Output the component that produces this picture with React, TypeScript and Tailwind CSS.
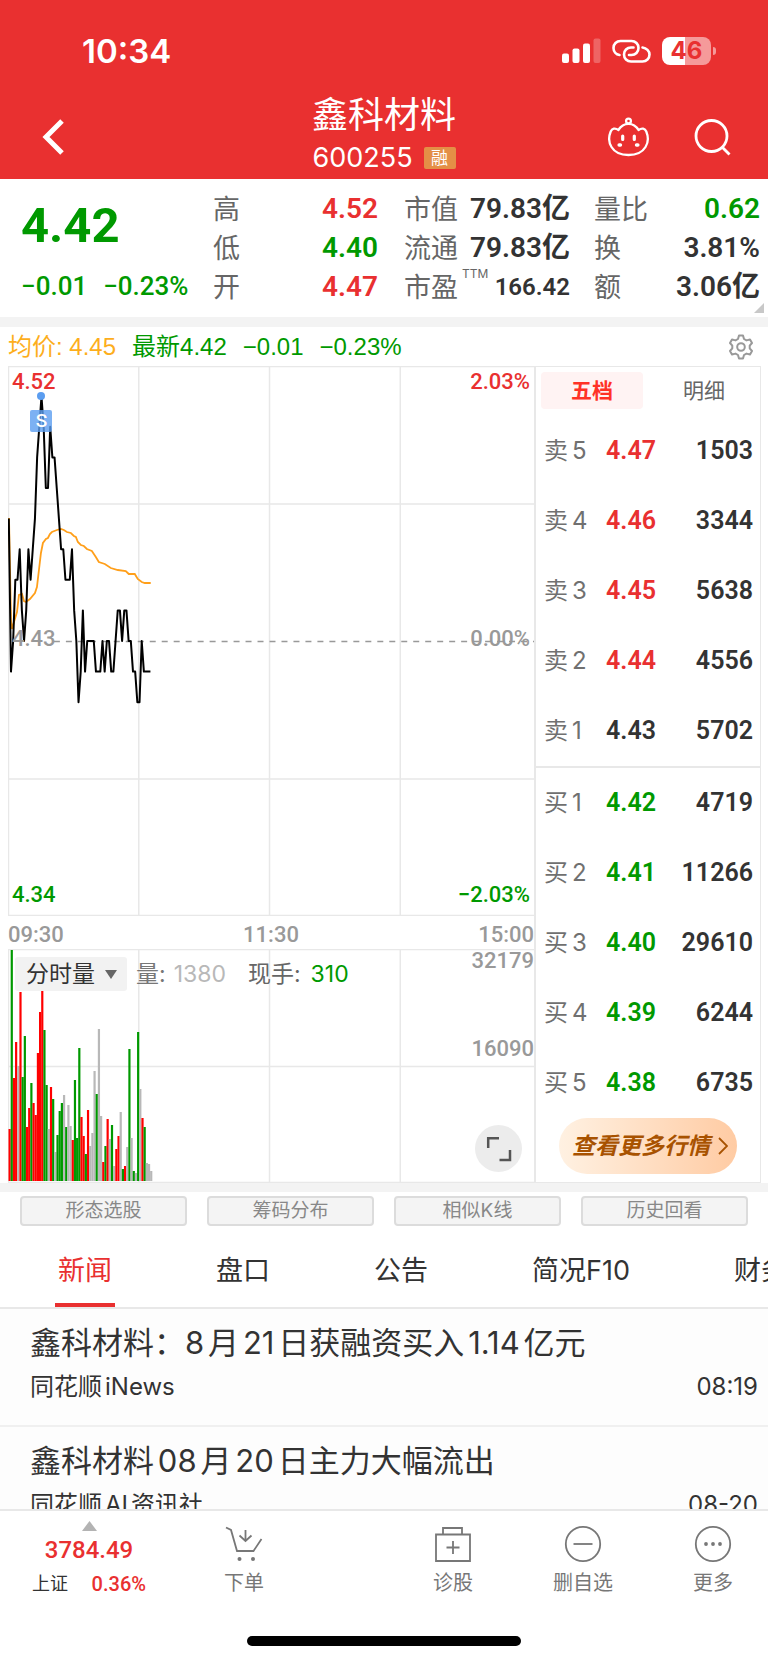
import React, { useState } from "react";

interface Level {
  label: string;
  price: string;
  volume: string;
  tone: string;
}

const RED = "text-[#e93030]";
const GREEN = "text-[#009900]";
const DARK = "text-[#333333]";

const numFont = "[font-family:Roboto,'Noto_Sans_CJK_SC',sans-serif]";

const sells: Level[] = [
  { label: "卖5", price: "4.47", volume: "1503", tone: RED },
  { label: "卖4", price: "4.46", volume: "3344", tone: RED },
  { label: "卖3", price: "4.45", volume: "5638", tone: RED },
  { label: "卖2", price: "4.44", volume: "4556", tone: RED },
  { label: "卖1", price: "4.43", volume: "5702", tone: DARK },
];

const buys: Level[] = [
  { label: "买1", price: "4.42", volume: "4719", tone: GREEN },
  { label: "买2", price: "4.41", volume: "11266", tone: GREEN },
  { label: "买3", price: "4.40", volume: "29610", tone: GREEN },
  { label: "买4", price: "4.39", volume: "6244", tone: GREEN },
  { label: "买5", price: "4.38", volume: "6735", tone: GREEN },
];

// one value per minute, in cents
const prices = [
  447, 442, 443, 445, 445, 446, 444, 443, 444, 446, 445, 446, 447, 449, 450, 451, 450, 448, 448, 450, 449, 449,
  448, 447, 446, 446, 445, 445, 445, 446, 444, 443, 441, 442, 444, 442, 443, 443, 443, 443, 442, 442, 442, 443,
  442, 443, 443, 442, 442, 443, 444, 444, 443, 444, 444, 443, 443, 442, 442, 441, 441, 443, 442, 442, 442, 442,
];

const average: [number, number][] = [
  [1, 152], [3, 254], [4, 263], [6, 256], [9, 246], [11, 229], [14, 228], [16, 235], [18, 236], [22, 233],
  [27, 227], [29, 221], [31, 204], [33, 187], [35, 177], [38, 173], [40, 172], [42, 168], [44, 166], [49, 164],
  [53, 163], [56, 164], [59, 166], [63, 167], [66, 170], [68, 171], [70, 176], [73, 179], [76, 180], [79, 183],
  [84, 185], [88, 191], [91, 196], [97, 198], [103, 202], [110, 204], [118, 205], [121, 208], [127, 208],
  [130, 213], [134, 216], [137, 217], [143, 217],
];

const R = "#ff0000";
const G = "#009900";
const N = "#b8b8b8";

const volumes: [number, string][] = [
  [52, R], [231, G], [103, R], [139, R], [115, N], [189, R], [104, G], [145, G], [54, R], [73, R], [98, G],
  [78, R], [66, R], [128, R], [169, R], [190, R], [151, G], [96, G], [52, N], [94, R], [82, G], [29, N],
  [46, G], [70, G], [78, G], [86, N], [54, G], [76, N], [55, N], [41, R], [101, G], [43, G], [133, G],
  [64, R], [45, R], [27, G], [71, R], [35, N], [48, N], [110, N], [87, G], [152, N], [65, N], [19, R],
  [35, G], [62, R], [42, N], [56, G], [15, N], [32, R], [45, R], [69, N], [12, G], [15, R], [34, N],
  [132, G], [43, N], [10, G], [8, N], [149, G], [92, N], [63, R], [54, G], [18, N], [17, N], [10, N],
];

const STEP = 2.183;
const priceX = (i: number) => 0.8 + i * STEP;
const priceY = (p: number) => 275 - (p - 443) * 30.6;
const PEAK = 15;

const StatusBar = () => (
  <div className="flex h-[98px] items-center justify-between pt-1 pr-[52px] pl-[82px]">
    <span className="text-[33px] leading-10 font-semibold">10:34</span>
    <div className="flex items-center gap-[10px]">
      <svg width="40" height="26" viewBox="0 0 40 26" fill="currentColor">
        <rect x="0" y="15.500" width="7" height="9.500" rx="2" />
        <rect x="10.500" y="10.500" width="7" height="14.500" rx="2" />
        <rect x="21" y="5.500" width="7" height="19.500" rx="2" />
        <rect x="31.500" y="0.500" width="7" height="24.500" rx="2" opacity="0.25" />
      </svg>
      <svg width="40" height="26" viewBox="0 0 40 26" fill="none" stroke="currentColor" strokeWidth="2.600" strokeLinecap="round">
        <path d="M7.500 17C4 16.500 1.500 13.500 1.500 10C1.500 6 4.500 3 8.500 3H19.500C23.500 3 26.500 6 26.500 10C26.500 14 23.500 17 19.500 17H17" />
        <path d="M30.500 9.500C34.500 10 37.500 13 37.500 16.500C37.500 20.500 34.500 23.500 30.500 23.500H19C15 23.500 12 20.500 12 16.500C12 12.500 15 9.500 19 9.500H21.500" />
      </svg>
      <div className="flex items-center gap-[2px]">
        <div className="flex h-7 w-[49px] items-center justify-center rounded-lg bg-[linear-gradient(90deg,#fff_47%,#f59a9a_47%)] text-2xl leading-7 font-bold text-[#e93030]">
          46
        </div>
        <div className="h-2 w-[3px] rounded-r-full bg-[#f59a9a]" />
      </div>
    </div>
  </div>
);

const TitleBar = () => (
  <div className="grid h-[81px] grid-cols-3">
    <div className="flex items-center pb-[7px] pl-[39px]">
      <button aria-label="返回">
        <svg width="28" height="38" viewBox="0 0 28 38" fill="none" stroke="currentColor" strokeWidth="5">
          <path d="M23 3L7 19L23 35" />
        </svg>
      </button>
    </div>
    <div className="flex flex-col items-center">
      <h1 className="-mt-2 text-[36px] leading-[44px] font-normal [font-family:'Noto_Sans_CJK_SC',sans-serif]">鑫科材料</h1>
      <div className="flex items-center gap-[11px]">
        <span className="text-[27px] leading-[48px]">600255</span>
        <span className="flex h-[22px] w-8 items-center justify-center rounded-[2px] bg-[#e48f46] text-[17px] leading-[22px]">融</span>
      </div>
    </div>
    <div className="flex items-center justify-end gap-[44px] pr-[36px] pb-[7px]">
      <button aria-label="助手">
        <svg width="42" height="42" viewBox="0 0 42 42" fill="none" stroke="currentColor" strokeWidth="2.300" strokeLinejoin="round">
          <circle cx="20.500" cy="5" r="2.400" />
          <path d="M20.500 7.800C25 7.800 28.500 10.500 30.500 14C34 11.500 37 12.500 38.300 15.500C40.500 21 40 27 37.500 31C34.500 36 28 39 20.500 39C13 39 6.500 36 3.500 31C1 27 0.500 21 2.700 15.500C4 12.500 7 11.500 10.500 14C12.500 10.500 16 7.800 20.500 7.800Z" />
          <path d="M14.700 20V23.500M26.300 20V23.500" strokeWidth="3.200" strokeLinecap="round" />
          <path d="M11.200 29H12.400M28.600 29H29.800" strokeWidth="3.600" strokeLinecap="round" />
        </svg>
      </button>
      <button aria-label="搜索">
        <svg width="38" height="38" viewBox="0 0 38 38" fill="none" stroke="currentColor" strokeWidth="2.800">
          <circle cx="17.500" cy="18" r="15.500" />
          <path d="M28 29L35.500 36.500" />
        </svg>
      </button>
    </div>
  </div>
);

const Stat = ({ label, sup, value, tone, small }: { label: string; sup?: string; value: string; tone: string; small?: boolean }) => (
  <div className="flex h-[39px] items-center justify-between">
    <dt className="flex pt-[3px] text-[27px] text-[#666666]">
      {label}
      {sup && <sup className="top-0 ml-1 text-xs leading-3">{sup}</sup>}
    </dt>
    <dd className={`${numFont} font-semibold ${tone} ${small ? "text-[24px]" : "text-[28px]"}`}>{value}</dd>
  </div>
);

const Quote = () => (
  <section className="relative flex h-[148px] border-b-10 border-[#f3f3f3] pt-[10px] pr-2 pl-[21px]">
    <div className={`w-[192px] shrink-0 ${numFont} ${GREEN}`}>
      <div className="pt-3 text-[49px] leading-[50px] font-bold">4.42</div>
      <div className="flex gap-4 pt-[17px] text-[26px] leading-9 font-medium">
        <span>−0.01</span>
        <span>−0.23%</span>
      </div>
    </div>
    <dl className="w-[165px] shrink-0">
      <Stat label="高" value="4.52" tone={RED} />
      <Stat label="低" value="4.40" tone={GREEN} />
      <Stat label="开" value="4.47" tone={RED} />
    </dl>
    <dl className="ml-[26px] w-[166px] shrink-0">
      <Stat label="市值" value="79.83亿" tone={DARK} />
      <Stat label="流通" value="79.83亿" tone={DARK} />
      <Stat label="市盈" sup="TTM" value="166.42" tone={DARK} small />
    </dl>
    <dl className="ml-6 min-w-0 flex-1">
      <Stat label="量比" value="0.62" tone={GREEN} />
      <Stat label="换" value="3.81%" tone={DARK} />
      <Stat label="额" value="3.06亿" tone={DARK} />
    </dl>
    <svg className="absolute right-1 bottom-1" width="10" height="10" viewBox="0 0 10 10" fill="#c8c8c8">
      <path d="M10 0V10H0Z" />
    </svg>
  </section>
);

const InfoBar = () => (
  <div className={`flex h-[39px] items-center pr-[14px] pl-2 text-2xl [font-family:'Liberation_Sans','Noto_Sans_CJK_SC',sans-serif] ${GREEN}`}>
    <span className="text-[#fdae1c]">均价: 4.45</span>
    <span className="ml-4">最新4.42</span>
    <span className="ml-4">−0.01</span>
    <span className="ml-4">−0.23%</span>
    <button aria-label="设置" className="ml-auto">
      <svg width="26" height="26" viewBox="0 0 26 26" fill="none" stroke="#999999" strokeWidth="2" strokeLinejoin="round">
        <path d="M11 1.500H15L16 5L18.500 6.400L22 5.500L24 9L21.700 11.700V14.300L24 17L22 20.500L18.500 19.600L16 21L15 24.500H11L10 21L7.500 19.600L4 20.500L2 17L4.300 14.300V11.700L2 9L4 5.500L7.500 6.400L10 5Z" />
        <circle cx="13" cy="13" r="3.800" />
      </svg>
    </button>
  </div>
);

const PriceChart = () => (
  <div className={`relative h-[550px] text-[22px] leading-7 font-medium ${numFont}`}>
    <svg className="absolute inset-0 h-full w-full" viewBox="0 0 527 550" preserveAspectRatio="none" fill="none">
      <path d="M0.500 0V550M131 0V550M262 0V550M393 0V550M0 0.500H527M0 138H527M0 413H527M0 549.500H527" stroke="#e8e8e8" strokeWidth="1.500" />
      <path d="M46 275.500H527" stroke="#999999" strokeWidth="1.300" strokeDasharray="6 6" />
      <polyline points={average.map((p) => p.join(",")).join(" ")} stroke="#ff9f1a" strokeWidth="1.800" />
    </svg>
    <svg className="absolute inset-0 h-full w-full" viewBox="0 0 527 550" preserveAspectRatio="none" fill="none">
      <polyline points={prices.map((p, i) => `${priceX(i)},${priceY(p)}`).join(" ")} stroke="#000000" strokeWidth="2" strokeLinejoin="round" />
    </svg>
    <div className="absolute top-[26px] -ml-[11px] flex w-[22px] flex-col items-center" style={{ left: `${(priceX(PEAK) / 527) * 100}%` }}>
      <span className="h-2 w-2 rounded-full bg-[#5b9df0]" />
      <span className="mt-[10px] flex h-[22px] w-[22px] items-center justify-center rounded-[2px] bg-[#5b9df0]/80 text-[19px] font-medium text-white">S</span>
    </div>
    <span className={`absolute top-[2px] left-1 ${RED}`}>4.52</span>
    <span className={`absolute top-[2px] right-1 ${RED}`}>2.03%</span>
    <span className="absolute top-[259px] left-1 text-[#999999]">4.43</span>
    <span className="absolute top-[259px] right-1 text-[#999999]">0.00%</span>
    <span className={`absolute bottom-[7px] left-1 ${GREEN}`}>4.34</span>
    <span className={`absolute right-1 bottom-[7px] ${GREEN}`}>−2.03%</span>
  </div>
);

const VolumeChart = () => (
  <div className="relative h-[234px]">
    <svg className="absolute inset-0 h-full w-full" viewBox="0 0 527 234" preserveAspectRatio="none">
      <path d="M0.500 0V234M131 0V234M262 0V234M393 0V234M0 0.500H527M0 117.500H527M0 233.500H527" stroke="#e8e8e8" strokeWidth="1.500" />
      {volumes.map(([h, color], i) => (
        <rect key={i} x={0.5 + i * STEP} y={232 - h} width="2.200" height={h} fill={color} />
      ))}
    </svg>
    <div className="relative flex items-center pt-2 pl-[7px] text-[23px] leading-[34px]">
      <label className="relative">
        <select aria-label="指标" className="h-[34px] w-[112px] appearance-none rounded-[3px] bg-[#f2f2f2] pl-[11px] text-[#333333] outline-none">
          <option>分时量</option>
        </select>
        <svg className="pointer-events-none absolute top-[13px] right-[10px]" width="12" height="9" viewBox="0 0 12 9" fill="#666666">
          <path d="M0 0H12L6 9Z" />
        </svg>
      </label>
      <span className="ml-[9px] text-[#777777]">量:</span>
      <span className="ml-2 text-[#b8b8b8]">1380</span>
      <span className="ml-[22px] text-[#666666]">现手:</span>
      <span className={`ml-[10px] ${GREEN}`}>310</span>
    </div>
    <span className={`absolute -top-[2px] right-0 text-[22px] leading-7 font-medium text-[#999999] ${numFont}`}>32179</span>
    <span className={`absolute top-[86px] right-0 text-[22px] leading-7 font-medium text-[#999999] ${numFont}`}>16090</span>
    <button aria-label="全屏" className="absolute right-3 bottom-[11px] flex h-[47px] w-[47px] items-center justify-center rounded-full bg-[#ececec]">
      <svg width="26" height="26" viewBox="0 0 26 26" fill="none" stroke="#555555" strokeWidth="2.500">
        <path d="M2.200 12V2.200H13M24 14V24H13.500" />
      </svg>
    </button>
  </div>
);

const LevelRows = ({ levels }: { levels: Level[] }) => (
  <tbody>
    {levels.map((l) => (
      <tr key={l.label} className="h-[70px]">
        <th scope="row" className="w-[62px] pl-2 text-left font-normal text-[#707070]">
          <span className="flex items-center gap-1 text-2xl">
            <span>{l.label[0]}</span>
            <span>{l.label[1]}</span>
          </span>
        </th>
        <td className={`pl-2 text-[25px] font-semibold ${numFont} ${l.tone}`}>{l.price}</td>
        <td className={`pr-[7px] text-right text-[25px] font-semibold text-[#333333] ${numFont}`}>{l.volume}</td>
      </tr>
    ))}
  </tbody>
);

const OrderBook = () => {
  const [tab, setTab] = useState("五档");

  return (
    <aside className="flex w-[227px] shrink-0 flex-col border-t border-r border-b border-l-2 border-[#e8e8e8]">
      <div className="flex h-[49px] gap-[10px] pt-[5px] pl-[5px]">
        {["五档", "明细"].map((name) => (
          <button
            key={name}
            onClick={() => setTab(name)}
            className={`h-[37px] w-[102px] rounded text-[21px] ${tab === name ? "bg-[#fff3f3] font-bold text-[#ff3226]" : "text-[#666666]"}`}
          >
            {name}
          </button>
        ))}
      </div>
      <table className="w-full border-collapse">
        <LevelRows levels={sells} />
      </table>
      <div className="border-t-2 border-[#e8e8e8]" />
      <table className="w-full border-collapse">
        <LevelRows levels={buys} />
      </table>
      <button className="mx-auto flex h-14 w-[178px] items-center justify-center gap-2 rounded-full bg-gradient-to-r from-[#fff1e2] to-[#ffcba3] pl-1 text-[23px] text-[#a85200]">
        <span className="font-bold italic">查看更多行情</span>
        <svg width="10" height="18" viewBox="0 0 10 18" fill="none" stroke="currentColor" strokeWidth="1.800">
          <path d="M1 1L9 9L1 17" />
        </svg>
      </button>
    </aside>
  );
};

const Tools = () => (
  <div className="flex gap-5 border-t-[9px] border-[#f3f3f3] px-5 pt-1">
    {["形态选股", "筹码分布", "相似K线", "历史回看"].map((name) => (
      <button key={name} className="h-[30px] flex-1 rounded border-2 border-[#dcdcdc] bg-[#f4f4f4] text-[19px] leading-[26px] text-[#888888]">
        {name}
      </button>
    ))}
  </div>
);

const Tabs = () => {
  const [active, setActive] = useState("新闻");

  return (
    <nav className="flex h-[83px] gap-[98px] overflow-hidden border-b-2 border-[#e8e8e8] pl-[55px]">
      {["新闻", "盘口", "公告", "简况F10", "财务"].map((name) => (
        <button
          key={name}
          onClick={() => setActive(name)}
          className={`shrink-0 border-b-4 px-[3px] pt-[14px] text-[27px] ${active === name ? "border-[#e93030] text-[#e93030]" : "border-transparent text-[#333333]"}`}
        >
          {name}
        </button>
      ))}
    </nav>
  );
};

const news = [
  { title: "鑫科材料：8月21日获融资买入1.14亿元", source: "同花顺iNews", time: "08:19" },
  { title: "鑫科材料08月20日主力大幅流出", source: "同花顺AI资讯社", time: "08-20" },
];

const News = () => (
  <section className="h-[200px] overflow-hidden bg-[#fdfdfd] text-[#333333] [text-autospace:normal]">
    {news.map((item) => (
      <a key={item.title} href="#" className="block h-[118px] border-b-2 border-[#f0f0f0] pt-3 pr-[10px] pl-[30px]">
        <h2 className="text-[31px] leading-[44px]">{item.title}</h2>
        <div className="flex justify-between pt-[2px] text-[24px] leading-10">
          <span>{item.source}</span>
          <time>{item.time}</time>
        </div>
      </a>
    ))}
  </section>
);

const Action = ({ name, children }: { name: string; children: React.ReactNode }) => (
  <button className="flex w-[72px] flex-col items-center gap-[6px] text-[20px] leading-7 text-[#777777]">
    <svg width="38" height="38" viewBox="0 0 38 38" fill="none" stroke="currentColor" strokeWidth="1.800">
      {children}
    </svg>
    {name}
  </button>
);

const BottomBar = () => (
  <footer className="border-t-2 border-[#e8e8e8] bg-white">
    <div className="flex h-[125px] pt-[14px] pr-[19px] pl-8">
      <button className={`-mt-1 flex w-[114px] flex-col items-center font-medium ${numFont} ${RED}`}>
        <svg width="15" height="10" viewBox="0 0 15 10" fill="#b3b3b3">
          <path d="M7.500 0L15 10H0Z" />
        </svg>
        <span className="mt-1 text-2xl leading-[30px]">3784.49</span>
        <span className="mt-[5px] flex w-full items-center justify-between text-[20px] leading-7">
          <span className="text-[18px] font-normal text-[#333333]">上证</span>
          0.36%
        </span>
      </button>
      <div className="ml-[62px]">
        <Action name="下单">
          <path d="M1 2.500L6 5L12 26H28.500L36.500 14" />
          <path d="M20.500 5V15.500M14.500 10.500L20.500 16L26.500 10.500" />
          <circle cx="14.500" cy="34" r="2" fill="currentColor" stroke="none" />
          <circle cx="28" cy="34" r="2" fill="currentColor" stroke="none" />
        </Action>
      </div>
      <div className="ml-auto flex gap-[58px]">
        <Action name="诊股">
          <path d="M2 9.500H36V36H2ZM9 9.500V3H28V9.500M19 16V29M12.500 22.500H25.500" />
        </Action>
        <Action name="删自选">
          <circle cx="19" cy="19" r="17.200" />
          <path d="M9.500 19H28.500" />
        </Action>
        <Action name="更多">
          <circle cx="19" cy="19" r="17.200" />
          <g fill="currentColor" stroke="none">
            <circle cx="12" cy="19" r="1.900" />
            <circle cx="19" cy="19" r="1.900" />
            <circle cx="26" cy="19" r="1.900" />
          </g>
        </Action>
      </div>
    </div>
    <div className="flex h-[29px] justify-center">
      <div className="h-[10px] w-[274px] rounded-full bg-black" />
    </div>
  </footer>
);

const App: React.FC = () => {
  return (
    <div className="bg-white [font-family:Inter,'Noto_Sans_CJK_SC',sans-serif]">
      <header className="bg-[#e93030] text-white">
        <StatusBar />
        <TitleBar />
      </header>
      <main>
        <Quote />
        <InfoBar />
        <div className="flex pr-[7px] pl-2">
          <div className="min-w-0 flex-1">
            <PriceChart />
            <div className={`grid h-[33px] grid-cols-3 items-center pt-[2px] text-[22px] font-medium text-[#999999] ${numFont}`}>
              <span>09:30</span>
              <span className="text-center">11:30</span>
              <span className="text-right">15:00</span>
            </div>
            <VolumeChart />
          </div>
          <OrderBook />
        </div>
        <Tools />
        <Tabs />
        <News />
      </main>
      <BottomBar />
    </div>
  );
};

export default App;
